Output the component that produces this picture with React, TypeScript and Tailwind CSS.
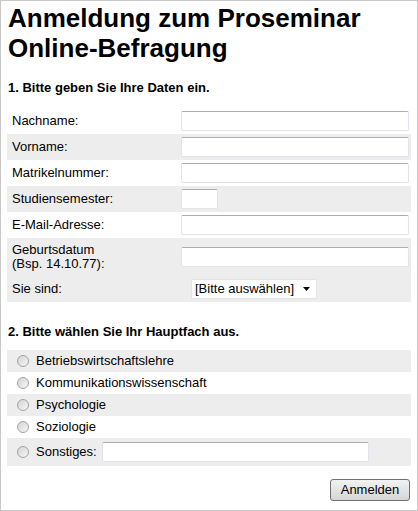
const fields = [
  { label: 'Nachname:', h: 'h-[26px]', bg: '', w: 'w-[228px]' },
  { label: 'Vorname:', h: 'h-[26px]', bg: 'bg-[#ededed]', w: 'w-[228px]' },
  { label: 'Matrikelnummer:', h: 'h-[26px]', bg: '', w: 'w-[228px]' },
  { label: 'Studiensemester:', h: 'h-[26px]', bg: 'bg-[#ededed]', w: 'w-[37px]' },
  { label: 'E-Mail-Adresse:', h: 'h-[26px]', bg: '', w: 'w-[228px]' },
];

const faecher = ['Betriebswirtschaftslehre', 'Kommunikationswissenschaft', 'Psychologie', 'Soziologie'];

function TextBox({ w }: { w: string }) {
  return (
    <input
      type="text"
      className={`${w} h-[20px] rounded-[2px] border border-[#e2e3ea] border-t-[#abadb3] bg-white px-1 text-[13px] outline-none`}
    />
  );
}

function Radio() {
  return (
    <span className="inline-block h-[12px] w-[12px] shrink-0 rounded-full border border-[#a3a3a3] bg-gradient-to-br from-[#d4d4d4] to-[#f6f6f6]" />
  );
}

export default function App() {
  return (
    <div
      className="flex h-[511px] w-[418px] flex-col border border-[#c8c8c8] bg-white px-[6px] pt-[2px] text-black"
      style={{ fontFamily: '"Liberation Sans", Arial, sans-serif' }}
    >
      <h1 className="pl-px text-[26px] font-bold leading-[30px]">
        Anmeldung zum Proseminar
        <br />
        Online-Befragung
      </h1>

      <h2 className="mt-[17px] pl-px text-[13px] font-bold leading-[16px]">1. Bitte geben Sie Ihre Daten ein.</h2>

      <div className="mt-[12px] flex flex-col text-[13px]">
        {fields.map((f) => (
          <div key={f.label} className={`flex items-center ${f.h} ${f.bg}`}>
            <span className="w-[174px] pl-[5px]">{f.label}</span>
            <TextBox w={f.w} />
          </div>
        ))}
        <div className="flex h-[38px] items-center bg-[#ededed]">
          <span className="w-[174px] pl-[5px] leading-[14px]">
            Geburtsdatum
            <br />
            (Bsp. 14.10.77):
          </span>
          <TextBox w="w-[228px]" />
        </div>
        <div className="flex h-[26px] items-center bg-[#ededed]">
          <span className="w-[184px] pl-[5px]">Sie sind:</span>
          <div className="flex h-[20px] w-[126px] items-center justify-between border border-[#e3e3e3] bg-white pl-[3px] pr-[6px]">
            <span>[Bitte auswählen]</span>
            <svg width="7" height="4" viewBox="0 0 7 4">
              <path d="M0 0h7L3.5 4z" fill="#000" />
            </svg>
          </div>
        </div>
      </div>

      <h2 className="mt-[22px] pl-px text-[13px] font-bold leading-[16px]">2. Bitte wählen Sie Ihr Hauptfach aus.</h2>

      <div className="mt-[10px] flex flex-col text-[13px]">
        {faecher.map((f, i) => (
          <div key={f} className={`flex h-[22px] items-center gap-[7px] pl-[10px] ${i % 2 === 0 ? 'bg-[#ededed]' : ''}`}>
            <Radio />
            <span>{f}</span>
          </div>
        ))}
        <div className="flex h-[28px] items-center gap-[7px] bg-[#ededed] pl-[10px]">
          <Radio />
          <span>Sonstiges:</span>
          <TextBox w="w-[267px] ml-[-2px]" />
        </div>
      </div>

      <div className="mt-[13px] flex justify-end pr-px">
        <button className="h-[22px] w-[80px] rounded-[3px] border border-[#707070] bg-gradient-to-b from-[#f2f2f2] to-[#d6d6d6] text-[13px]">
          Anmelden
        </button>
      </div>
    </div>
  );
}
